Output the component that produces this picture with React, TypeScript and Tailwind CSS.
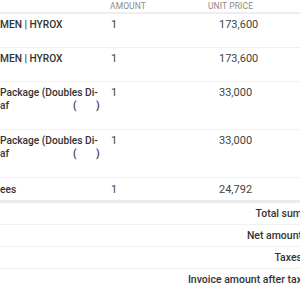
import React from "react";

// invoice line items (left part of the name column is cut off in the view)
interface LineItem {
  lines: string[];
  amount: string;
  price: string;
  bilingual?: boolean;
  note?: boolean;
}

const items: LineItem[] = [
  { lines: ["MEN | HYROX"], amount: "1", price: "173,600", note: true },
  { lines: ["MEN | HYROX"], amount: "1", price: "173,600", note: true },
  { lines: ["Package (Doubles Di-"], amount: "1", price: "33,000", bilingual: true, note: true },
  { lines: ["Package (Doubles Di-"], amount: "1", price: "33,000", bilingual: true, note: true },
  { lines: ["ees"], amount: "1", price: "24,792" },
];

const summary = ["Total sum", "Net amount", "Taxes", "Invoice amount after tax"];

export default function App() {
  return (
    <div className="w-[300px] h-[300px] overflow-hidden bg-white font-['Roboto','Liberation_Sans',sans-serif] text-[#333333]">
      <div className="w-[440px]">
        {/* header */}
        <div className="grid grid-cols-[110px_98px_112px_120px] h-[14px] border-b-2 border-[#eeeeee] text-[8.5px] leading-[12px] tracking-[0.1px] text-[#8a8a8a]">
          <div />
          <div>AMOUNT</div>
          <div>UNIT PRICE</div>
          <div />
        </div>

        {/* items */}
        {items.map((item, idx) => {
          const last = idx === items.length - 1;
          return (
            <div
              key={idx}
              className={`grid grid-cols-[110px_100px_110px_120px] pb-[4px] text-[11px] leading-[13px] ${
                last
                  ? "pt-[5px] border-b-[3px] border-[#ebebeb]"
                  : "pt-[4px] border-b border-[#f0f0f0]"
              }`}
            >
              <div className="font-medium text-[10.2px] whitespace-nowrap">
                {item.lines.map((l) => (
                  <div key={l}>{l}</div>
                ))}
                {item.bilingual && (
                  <div className="flex">
                    <span className="w-[73px]">af</span>
                    <span className="w-[23px]">(</span>
                    <span>)</span>
                  </div>
                )}
                {item.note && (
                  <div className={item.bilingual ? "h-[13px]" : "h-[12px]"} />
                )}
              </div>
              <div className="pl-[1px] text-[#444444]">{item.amount}</div>
              <div className="pl-[9px] text-[#444444]">{item.price}</div>
              <div />
            </div>
          );
        })}

        {/* totals */}
        {summary.map((label, idx) => (
          <div
            key={label}
            className={`grid grid-cols-[320px_120px] py-[4px] text-[10.5px] leading-[13px] ${
              idx < summary.length - 1 ? "border-b border-[#f0f0f0]" : ""
            }`}
          >
            <div className="text-right pr-[18px] font-medium whitespace-nowrap">{label}</div>
            <div />
          </div>
        ))}
      </div>
    </div>
  );
}
